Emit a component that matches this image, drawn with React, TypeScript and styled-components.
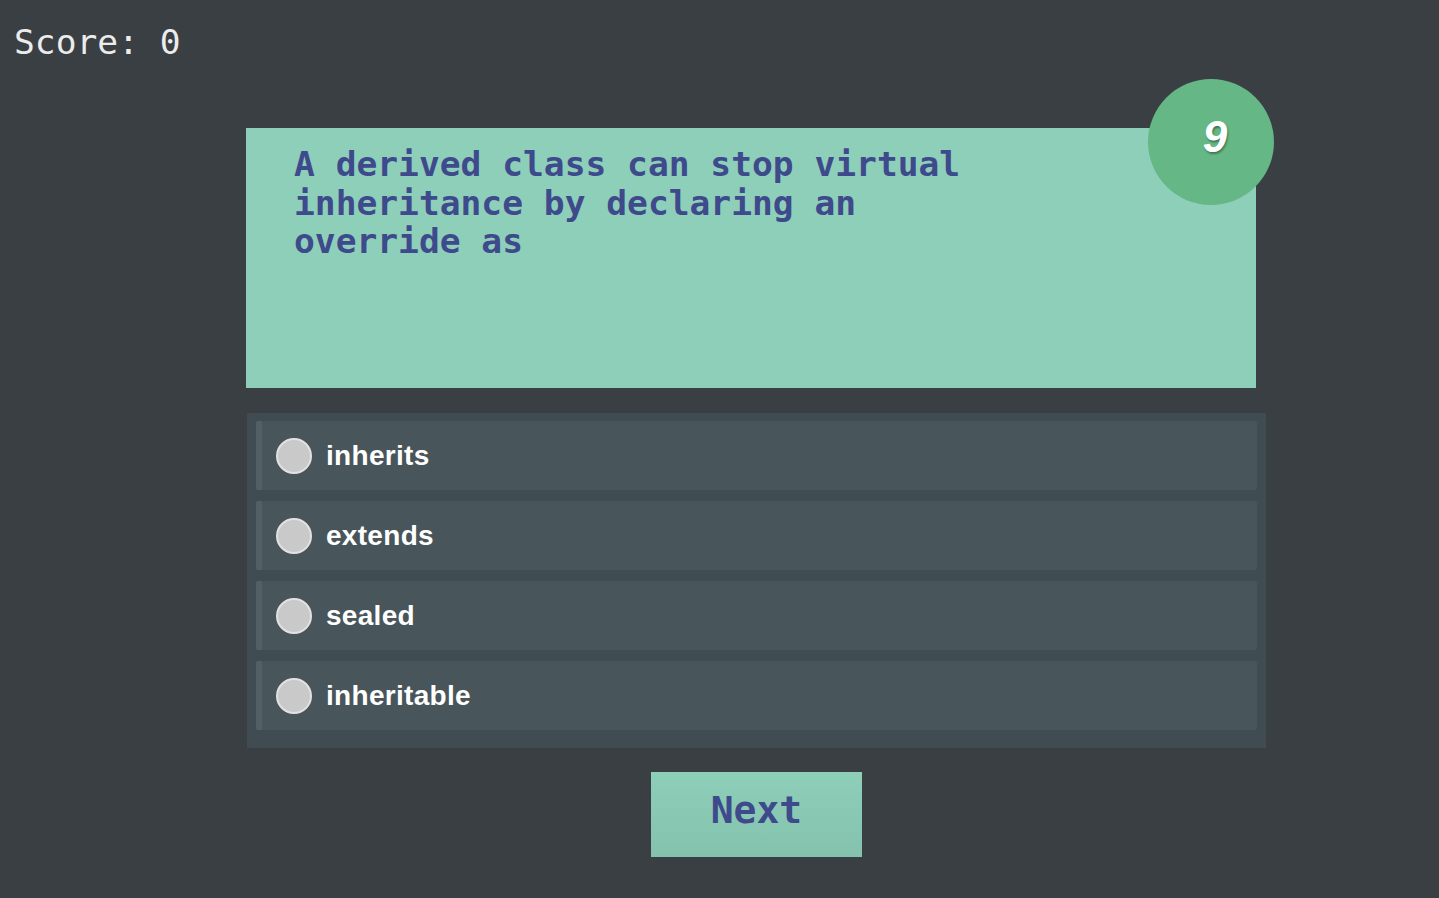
import styled, { createGlobalStyle } from "styled-components";

const GlobalStyle = createGlobalStyle`
  html, body {
    margin: 0;
    padding: 0;
    background-color: #3a3f44;
  }
  body {
    min-height: 898px;
  }
`;

const Page = styled.div`
  min-height: 898px;
  background-color: #3a3f44;
  display: flex;
  flex-direction: column;
`;

const ScoreBar = styled.header`
  padding: 23px 14px 0;
  height: 38px;
  font-family: "DejaVu Sans Mono", "Liberation Mono", monospace;
  font-size: 34.6px;
  line-height: 38px;
  color: #ececec;
  white-space: pre;
`;

const Column = styled.main`
  width: 1019px;
  margin: 67px 0 0 247px;
  display: flex;
  flex-direction: column;
  align-items: center;
`;

const QuestionCard = styled.section`
  position: relative;
  align-self: flex-start;
  margin-left: -1px;
  width: 1010px;
  height: 260px;
  box-sizing: border-box;
  padding: 17px 48px;
  background-color: #8ecfba;
`;

const QuestionText = styled.h2`
  margin: 0;
  width: 700px;
  font-family: "DejaVu Sans Mono", "Liberation Mono", monospace;
  font-weight: bold;
  font-size: 34.6px;
  line-height: 38.5px;
  color: #3e4a8b;
`;

const Timer = styled.div`
  position: absolute;
  left: 902px;
  top: -49px;
  width: 126px;
  height: 126px;
  border-radius: 50%;
  background-color: #65b785;
  display: flex;
  align-items: center;
  justify-content: center;
  font-family: "Liberation Sans", Arial, sans-serif;
  font-style: italic;
  font-weight: bold;
  font-size: 44px;
  color: #ffffff;
  text-shadow: 1px 2px 2px rgba(0, 0, 0, 0.35);
  padding-bottom: 10px;
  padding-left: 8px;
  box-sizing: border-box;
`;

const OptionList = styled.ul`
  list-style: none;
  margin: 25px 0 0;
  width: 100%;
  box-sizing: border-box;
  padding: 8px 9px 18px;
  background-color: #404c51;
  display: flex;
  flex-direction: column;
  gap: 11px;
`;

const Option = styled.li`
  height: 69px;
  display: flex;
  align-items: center;
  gap: 14px;
  padding-left: 14px;
  border-left: 6px solid #525f65;
  border-radius: 2px;
  background-color: #48555a;
  font-family: "Liberation Sans", Arial, sans-serif;
  font-weight: bold;
  font-size: 28px;
  letter-spacing: 0.3px;
  color: #ffffff;
  cursor: pointer;
`;

const Radio = styled.span`
  width: 36px;
  height: 36px;
  box-sizing: border-box;
  border-radius: 50%;
  border: 2px solid #e2e2e2;
  background-color: #c9c9c9;
  flex-shrink: 0;
`;

const NextButton = styled.button`
  margin-top: 24px;
  width: 211px;
  height: 85px;
  padding: 0 0 10px;
  border: none;
  background: linear-gradient(#8ecfba, #84c2ad);
  font-family: "DejaVu Sans Mono", "Liberation Mono", monospace;
  font-weight: bold;
  font-size: 38px;
  color: #3e4a8b;
  cursor: pointer;
`;

const options = ["inherits", "extends", "sealed", "inheritable"];

const App = () => {
  return (
    <>
      <GlobalStyle />
      <Page>
        <ScoreBar>Score: 0</ScoreBar>
        <Column>
          <QuestionCard>
            <QuestionText>
              A derived class can stop virtual inheritance by declaring an
              override as
            </QuestionText>
            <Timer>9</Timer>
          </QuestionCard>
          <OptionList>
            {options.map((o) => (
              <Option key={o}>
                <Radio />
                {o}
              </Option>
            ))}
          </OptionList>
          <NextButton>Next</NextButton>
        </Column>
      </Page>
    </>
  );
};

export default App;
